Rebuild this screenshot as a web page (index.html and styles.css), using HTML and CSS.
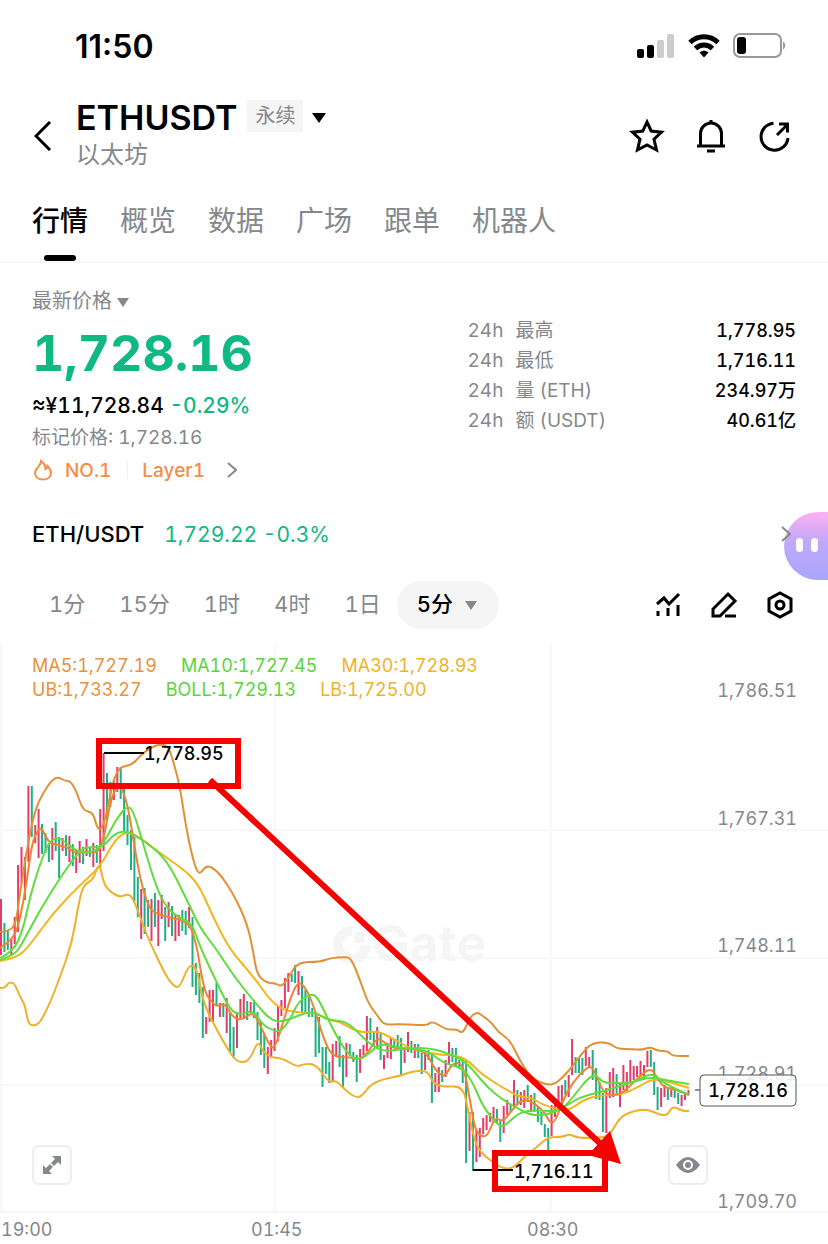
FILE: index.html
```
<!DOCTYPE html>
<html lang="zh-CN">
<head>
    <meta charset="UTF-8">
    <title>ETHUSDT 永续</title>
    <meta name="viewport" content="width=device-width, initial-scale=1">
    <link rel="stylesheet" href="styles.css">
</head>
<body>

<div class="statusbar">
    <span class="clock">11:50</span>
    <div class="status-icons">
        <svg width="38" height="24" viewBox="0 0 38 24">
            <rect x="0" y="15" width="7" height="9" rx="2"/>
            <rect x="10" y="11" width="7" height="13" rx="2"/>
            <rect x="20" y="6" width="7" height="18" rx="2" fill="#ccc"/>
            <rect x="30" y="0" width="7" height="24" rx="2" fill="#ccc"/>
        </svg>
        <svg width="32" height="24" viewBox="0 0 32 24" fill="none" stroke="#000" stroke-width="5">
            <path d="M2 8.500C10 .8 22 .8 30 8.500"/>
            <path d="M7.500 14.500C12.500 9.800 19.500 9.800 24.500 14.500"/>
            <path d="M11.500 18.500C14 16.300 18 16.300 20.500 18.500L16 23.500Z" fill="#000" stroke="none"/>
        </svg>
        <svg width="54" height="26" viewBox="0 0 54 26">
            <rect x="1" y="1" width="47" height="23" rx="6" fill="none" stroke="#999" stroke-width="2"/>
            <rect x="4" y="4" width="9" height="17" rx="3"/>
            <path d="M50 8.500C53 10 53 15 50 16.500Z" fill="#999"/>
        </svg>
    </div>
</div>

<header class="topbar">
    <button class="icon-btn back" aria-label="返回">
        <svg width="18" height="30" viewBox="0 0 18 30"><path d="M16 1L2 15L16 29"/></svg>
    </button>
    <div class="pair">
        <div class="pair-row">
            <h1>ETHUSDT</h1>
            <span class="tag">永续</span>
            <svg class="caret" width="14" height="10" viewBox="0 0 14 10"><path d="M0 0H14L7 10Z"/></svg>
        </div>
        <div class="pair-sub">以太坊</div>
    </div>
    <div class="top-actions">
        <button class="icon-btn" aria-label="收藏">
            <svg width="36" height="36" viewBox="0 0 36 36"><path d="M18 4L22.200 13L32.500 14.200L25 21.200L27.500 32L18 27L8.500 32L11 21.200L3.500 14.200L13.800 13Z"/></svg>
        </button>
        <button class="icon-btn" aria-label="提醒">
            <svg width="36" height="36" viewBox="0 0 36 36"><path d="M18 2V5M4 28H32M7.500 28V15.500A10.500 10.500 0 0 1 28.500 15.500V28M14 33H22"/></svg>
        </button>
        <button class="icon-btn" aria-label="分享">
            <svg width="36" height="36" viewBox="0 0 36 36"><path d="M16.500 5.200A13.500 13.500 0 1 0 31 20M20 17L30 7M22 6H30.500V14.500"/></svg>
        </button>
    </div>
</header>

<nav class="tabs">
    <a href="#" class="active">行情</a>
    <a href="#">概览</a>
    <a href="#">数据</a>
    <a href="#">广场</a>
    <a href="#">跟单</a>
    <a href="#">机器人</a>
</nav>

<section class="summary">
    <div class="quote">
        <div class="quote-label">最新价格
            <svg width="12" height="9" viewBox="0 0 12 9"><path d="M0 0H12L6 9Z" fill="#84888c"/></svg>
        </div>
        <div class="price">1,728.16</div>
        <div class="fiat">≈¥11,728.84 <span class="up">-0.29%</span></div>
        <div class="mark">标记价格: 1,728.16</div>
        <div class="badges">
            <svg width="22" height="22" viewBox="0 0 22 22"><path d="M9 2C12 4 13.500 7 13.500 10C15 9.500 15.500 8 15.500 7C18 9.500 19 11.500 19 14C19 18 15.500 20.500 11 20.500C6.500 20.500 3 18 3 14C3 11 5 9.500 6.500 7.500C8 5.500 9 4 9 2Z" fill="none" stroke="#f78c45" stroke-width="2"/></svg>
            <span>NO.1</span>
            <i class="divider"></i>
            <span>Layer1</span>
            <svg class="chev" width="10" height="16" viewBox="0 0 10 16"><path d="M1 1L9 8L1 15"/></svg>
        </div>
    </div>
    <table class="stats">
        <tr><th><b>24h</b>最高</th><td>1,778.95</td></tr>
        <tr><th><b>24h</b>最低</th><td>1,716.11</td></tr>
        <tr><th><b>24h</b>量 (ETH)</th><td>234.97万</td></tr>
        <tr><th><b>24h</b>额 (USDT)</th><td>40.61亿</td></tr>
    </table>
</section>

<div class="spot">
    <span class="spot-name">ETH/USDT</span>
    <span class="spot-price up">1,729.22 -0.3%</span>
    <button class="helper" aria-label="助手"><i></i><i></i></button>
    <svg class="chev" width="10" height="16" viewBox="0 0 10 16"><path d="M1 1L9 8L1 15"/></svg>
</div>

<div class="intervals">
    <button>1分</button>
    <button>15分</button>
    <button>1时</button>
    <button>4时</button>
    <button>1日</button>
    <button class="current">5分 <svg width="12" height="9" viewBox="0 0 12 9"><path d="M0 0H12L6 9Z" fill="#84888c"/></svg></button>
    <div class="chart-tools">
        <button class="icon-btn" aria-label="指标">
            <svg width="28" height="28" viewBox="0 0 28 28"><path d="M3 13L10 7L15 13L25 3M4 20V25M14 17V25M24 14V25"/></svg>
        </button>
        <button class="icon-btn" aria-label="画线">
            <svg width="28" height="28" viewBox="0 0 28 28"><path d="M3 25V18L18 3L25 10L10 25ZM15 25H26"/></svg>
        </button>
        <button class="icon-btn" aria-label="设置">
            <svg width="28" height="28" viewBox="0 0 28 28"><path d="M14 2L25 8V20L14 26L3 20V8Z"/><circle cx="14" cy="14" r="4"/></svg>
        </button>
    </div>
</div>

<main class="chart">
    <div class="legend">
        <div class="legend-row"><span class="c1">MA5:1,727.19</span><span class="c2">MA10:1,727.45</span><span class="c3">MA30:1,728.93</span></div>
        <div class="legend-row"><span class="c1">UB:1,733.27</span><span class="c2">BOLL:1,729.13</span><span class="c3">LB:1,725.00</span></div>
    </div>

    <svg class="plot" viewBox="0 644 828 600">
        <g class="grid">
            <path d="M0 830H828M0 958H828M0 1085H828M0 1212H828M1 644V1212M275 644V1212M551 644V1212"/>
        </g>
        <g class="watermark">
            <path d="M352 931A14 14 0 1 0 366 945"/>
            <rect x="354" y="932" width="11" height="11"/>
            <text x="372" y="961">Gate</text>
        </g>
        <g class="axis">
            <text x="797" y="697">1,786.51</text>
            <text x="797" y="825">1,767.31</text>
            <text x="797" y="952">1,748.11</text>
            <text x="797" y="1080">1,728.91</text>
            <text x="797" y="1208">1,709.70</text>
        </g>
        <g class="time">
            <text x="1" y="1236">19:00</text>
            <text x="251" y="1236">01:45</text>
            <text x="527" y="1236">08:30</text>
        </g>

        <g id="candles"></g>
        <g id="lines"></g>

        <!-- high / low markers -->
        <path class="marker" d="M104 753H144M473 1170H513"/>
        <text class="marker-text" x="144" y="760">1,778.95</text>
        <text class="marker-text" x="514" y="1178">1,716.11</text>

        <!-- last price -->
        <path d="M695 1090H700" stroke="#222"/>
        <rect x="700" y="1075" width="96" height="31" rx="4" fill="#fff" fill-opacity=".85" stroke="#555"/>
        <text class="last" x="748" y="1097">1,728.16</text>

        <g class="note">
            <rect x="99" y="741" width="139" height="45"/>
            <rect x="495" y="1153" width="110" height="36"/>
            <path d="M210 780L604 1147"/>
            <path class="head" d="M621 1164L610 1131L588 1155Z"/>
        </g>
    </svg>

    <button class="float-btn expand" aria-label="全屏">
        <svg width="20" height="20" viewBox="0 0 20 20"><path d="M10 1H19V10L16 7L12 11L9 8L13 4ZM1 10L4 13L8 9L11 12L7 16L10 19H1Z" fill="#84888c"/></svg>
    </button>
    <button class="float-btn eye" aria-label="显示">
        <svg width="24" height="18" viewBox="0 0 24 18"><path d="M0 9Q12 -7 24 9Q12 25 0 9Z" fill="#84888c"/><circle cx="12" cy="9" r="4" fill="#84888c" stroke="#fff" stroke-width="2"/></svg>
    </button>
</main>

<script src="chart.js"></script>
</body>
</html>
```
FILE: styles.css
```
* {
    box-sizing: border-box;
}

body {
    margin: 0;
    background: #fff;
    color: #000;
    font-family: Inter, "Noto Sans CJK SC", sans-serif;
    font-size: 20px;
    font-variant-numeric: tabular-nums;
}

button {
    font: inherit;
    color: inherit;
    background: none;
    border: 0;
    padding: 0;
    cursor: pointer;
}

a {
    color: inherit;
    text-decoration: none;
}

svg {
    flex: none;
}

.up {
    color: #10b882;
}

/* status bar */
.statusbar {
    display: flex;
    justify-content: space-between;
    align-items: center;
    height: 90px;
    padding: 2px 41px 0 75px;
}

.clock {
    font-size: 32px;
    font-weight: 600;
    font-variant-numeric: normal;
}

.status-icons {
    display: flex;
    align-items: center;
    gap: 13px;
}

/* header */
.topbar {
    display: flex;
    align-items: center;
    height: 92px;
    padding: 0 35px 0 34px;
}

.icon-btn {
    display: flex;
}

.icon-btn svg {
    fill: none;
    stroke: #000;
    stroke-width: 3;
}

.back {
    width: 42px;
}

.pair {
    flex: 1;
    padding-bottom: 2px;
}

.pair-row {
    display: flex;
    align-items: center;
    height: 40px;
}

h1 {
    margin: 0;
    font-size: 34px;
    font-weight: 600;
    line-height: 40px;
}

.tag {
    margin: 0 9px 4px 10px;
    padding: 0 8px;
    background: #f5f5f5;
    color: #84888c;
    line-height: 32px;
}

.pair-sub {
    color: #84888c;
    font-size: 24px;
    line-height: 34px;
}

.top-actions {
    display: flex;
    gap: 28px;
}

/* tabs */
.tabs {
    display: flex;
    gap: 32px;
    height: 81px;
    padding: 0 32px;
    border-bottom: 2px solid #f8f8f8;
    color: #84888c;
    font-size: 28px;
    line-height: 78px;
}

.tabs .active {
    position: relative;
    color: #000;
    font-weight: 500;
}

.tabs .active::after {
    content: "";
    position: absolute;
    left: 12px;
    right: 12px;
    bottom: 0;
    height: 6px;
    border-radius: 3px;
    background: #000;
}

/* price block */
.summary {
    display: flex;
    justify-content: space-between;
    padding: 22px 32px 0;
}

.quote-label {
    color: #84888c;
    line-height: 32px;
}

.quote-label svg {
    margin-bottom: 1px;
}

.price {
    color: #10b882;
    font-size: 50px;
    font-weight: 700;
    line-height: 72px;
}

.fiat {
    font-size: 21px;
    font-weight: 500;
    line-height: 34px;
}

.mark {
    color: #84888c;
    font-size: 19px;
    line-height: 30px;
}

.badges {
    display: flex;
    align-items: center;
    height: 34px;
    color: #f78c45;
    font-size: 19px;
    font-weight: 500;
}

.badges span {
    margin-left: 11px;
}

.divider {
    width: 1px;
    height: 18px;
    margin-left: 16px;
    background: #eee;
}

.badges .divider + span {
    margin: 0 22px 0 14px;
}

.chev {
    fill: none;
    stroke: #84888c;
    stroke-width: 2;
}

.stats {
    width: 43%;
    align-self: flex-start;
    margin-top: 31px;
    border-collapse: collapse;
    font-size: 19px;
    line-height: 30px;
}

.stats th {
    padding: 0;
    color: #84888c;
    font-weight: 400;
    text-align: left;
}

.stats b {
    margin-right: 12px;
    font-weight: 400;
}

.stats td {
    padding: 0;
    font-size: 18px;
    font-weight: 500;
    text-align: right;
}

.spot {
    position: relative;
    display: flex;
    align-items: center;
    gap: 20px;
    height: 44px;
    margin-top: 25px;
    padding: 0 37px 0 32px;
    font-size: 22px;
}

.spot-name {
    font-weight: 500;
}

.spot-price {
    font-size: 21px;
}

.spot .chev {
    position: relative;
    margin-left: auto;
}

.helper {
    position: absolute;
    top: 0;
    right: 0;
    display: flex;
    gap: 8px;
    width: 44px;
    height: 68px;
    padding: 26px 0 0 12px;
    border-radius: 34px 0 0 34px;
    background: linear-gradient(#ffaff5, #c0a8f8 45%, #a8a6ff);
}

.helper i {
    width: 7px;
    height: 14px;
    border-radius: 4px;
    background: #fff;
}

/* interval picker */
.intervals {
    display: flex;
    align-items: center;
    height: 88px;
    padding: 10px 34px 0 49px;
    color: #84888c;
    font-size: 22px;
}

.intervals > button {
    margin-right: 34px;
    line-height: 30px;
    padding-bottom: 2px;
}

.intervals > .current {
    height: 48px;
    margin: 0 0 0 -18px;
    padding: 0 22px 2px 20px;
    border-radius: 24px;
    background: #f5f5f5;
    color: #000;
    font-weight: 500;
}

.current svg {
    margin: 0 0 2px 6px;
}

.chart-tools {
    display: flex;
    gap: 28px;
    margin-left: auto;
}

/* chart */
.chart {
    position: relative;
}

.plot {
    display: block;
    width: 100%;
}

.legend {
    position: absolute;
    top: 10px;
    left: 32px;
    font-size: 18px;
    line-height: 24px;
}

.legend-row {
    display: flex;
    gap: 24px;
}

.c1 { color: #e8923a; }
.c2 { color: #5bd43c; }
.c3 { color: #efb329; }

.grid path {
    stroke: #f8f8f8;
    stroke-width: 2;
}

.watermark {
    fill: #f5f5f5;
    font-size: 50px;
    font-weight: 700;
}

.watermark path {
    fill: none;
    stroke: #f5f5f5;
    stroke-width: 10;
}

.axis, .time {
    fill: #84888c;
    font-size: 18px;
}

.axis {
    text-anchor: end;
}

#candles path {
    fill: none;
    stroke-width: 2;
}

#lines path {
    fill: none;
    stroke-width: 2;
    stroke-linejoin: round;
}

.marker {
    stroke: #000;
    stroke-width: 2;
}

.marker-text, .last {
    font-size: 18px;
    font-weight: 500;
}

.last {
    text-anchor: middle;
}

.note {
    fill: none;
    stroke: #f60000;
    stroke-width: 6;
}

.note .head {
    fill: #f60000;
    stroke: none;
}

.float-btn {
    position: absolute;
    bottom: 59px;
    display: flex;
    align-items: center;
    justify-content: center;
    width: 40px;
    height: 40px;
    border: 2px solid #eee;
    border-radius: 7px;
    background: #fff;
}

.expand {
    left: 32px;
}

.eye {
    right: 120px;
}
```
FILE: chart.js
```
// one entry per 5 min candle: colour, top, bottom
const candles = `r899-955 g923-952 g930-950 r938-955 r917-944 r865-932 r847-883 r857-900 r786-862 g786-837
r825-843 r809-858 g824-854 g833-853 g843-862 r828-860 g822-851 g837-878 r838-851 g835-856
r836-862 g844-866 r850-873 r841-863 g847-864 r839-856 g848-857 r843-867 g845-863 r809-867
r753-851 g773-820 g782-807 r779-800 r767-792 g767-799 g788-832 g815-845 g830-870 g837-901
g877-917 r889-939 g888-934 g900-927 r899-941 g893-927 r900-946 r895-919 g907-941 r902-927
g906-936 r915-941 r915-936 g910-931 g911-935 r907-928 g917-987 g963-995 g973-1003 g987-1038
r1017-1034 r990-1022 r990-1022 g983-1006 r1003-1017 g1003-1017 r998-1033 g1013-1052 g1027-1058 r1012-1048
r999-1018 r994-1018 g1001-1020 r1002-1012 g1000-1018 g1012-1040 g1022-1055 g1033-1068 r1047-1074 r1040-1058
r1028-1051 r1006-1041 r1000-1016 r978-1008 r973-992 g974-982 g965-983 r971-995 g976-1013 g990-1013
g997-1017 g1008-1017 g1013-1057 g1017-1053 g1047-1087 g1047-1074 g1062-1083 r1044-1082 r1041-1057 g1036-1067
g1055-1087 r1043-1077 g1044-1056 g1052-1062 g1055-1082 r1049-1073 r1045-1055 r1016-1051 g1018-1040 g1032-1047
r1027-1048 g1032-1060 r1055-1069 r1043-1058 r1037-1059 g1040-1048 g1035-1047 g1038-1075 r1047-1063 r1032-1052
g1041-1053 r1044-1058 g1044-1058 g1053-1074 r1052-1070 g1050-1060 g1053-1103 r1073-1092 r1067-1092 g1070-1082
r1060-1077 r1042-1065 g1048-1062 g1048-1066 g1060-1067 g1059-1083 g1060-1163 r1112-1151 g1112-1171 r1130-1162
r1128-1157 r1118-1134 r1115-1130 r1113-1122 r1107-1122 g1109-1123 g1120-1142 r1106-1133 r1100-1115 g1104-1112
r1080-1108 g1090-1105 r1092-1105 r1090-1108 g1085-1102 r1095-1112 g1093-1112 g1107-1122 g1112-1125 g1124-1137
g1128-1152 r1105-1136 r1100-1117 r1086-1108 r1085-1103 g1080-1095 r1075-1097 r1039-1075 g1057-1073 g1058-1073
g1058-1075 r1047-1066 r1057-1068 g1050-1080 g1068-1099 g1082-1100 g1093-1132 r1088-1133 r1072-1098 r1068-1097
g1074-1095 r1082-1107 r1065-1090 r1072-1092 r1060-1082 r1066-1080 r1066-1077 r1061-1077 r1065-1080 r1051-1067
g1050-1067 g1062-1095 g1087-1110 r1088-1107 r1085-1097 g1088-1100 r1086-1097 g1088-1098 g1093-1104 r1095-1106
r1092-1100 r1090-1095`.split(/\s+/);

const lines = [
    // UB
    ['#e39034', '0,932 10,931 16,923 20,893 28,843 35,810 43,793 52,780 58,777 65,781 70,781 76,790 83,811 93,812 97,828 101,830 106,817 112,785 119,767 132,765 140,756 150,748 160,744 168,746 173,760 180,787 186,827 193,860 199,876 206,865 217,870 233,893 247,923 253,950 257,975 267,983 275,983 282,987 290,975 298,962 320,962 330,958 345,957 351,958 360,980 368,1003 377,1015 384,1025 397,1024 420,1025 428,1025 432,1021 447,1030 457,1029 463,1034 470,1017 477,1012 483,1016 492,1023 498,1032 510,1040 518,1057 527,1072 535,1080 547,1085 555,1084 563,1077 572,1067 583,1052 592,1043 608,1042 617,1049 633,1049 642,1050 650,1047 658,1051 668,1051 672,1056 689,1056'],
    // LB
    ['#efb02a', '0,988 5,988 8,983 14,982 20,997 25,1005 28,1023 33,1026 40,1023 50,1003 60,977 72,943 78,907 83,885 93,880 97,868 100,865 104,885 112,893 120,897 128,894 133,898 140,917 150,943 167,978 175,987 180,987 189,964 197,968 203,1003 219,1034 233,1058 241,1063 250,1060 258,1040 263,1052 272,1058 282,1058 297,1067 303,1064 316,1064 329,1083 336,1080 347,1092 357,1098 363,1095 370,1085 383,1079 400,1076 410,1072 427,1070 433,1083 443,1087 463,1086 468,1110 475,1143 483,1155 500,1167 507,1169 515,1167 523,1158 537,1147 548,1137 563,1137 569,1134 578,1138 600,1138 610,1135 620,1117 633,1111 647,1109 660,1115 668,1115 672,1106 683,1111 689,1111'],
    // MA30
    ['#f3b71c', '0,961 17,958 30,945 53,913 80,885 100,867 113,843 123,833 133,833 147,843 167,858 187,872 200,887 213,917 230,950 253,976 270,1000 283,1010 303,1013 313,1012 330,1020 340,1022 360,1033 377,1031 390,1037 413,1050 427,1052 440,1055 457,1055 470,1062 480,1073 503,1088 520,1097 530,1097 543,1105 567,1112 583,1100 600,1095 620,1095 637,1088 653,1078 673,1083 689,1088'],
    // MA5
    ['#ee8433', '0,948 13,940 20,920 27,880 32,843 38,830 42,828 48,842 57,845 67,847 75,853 87,852 99,853 105,833 110,803 117,785 122,788 128,807 133,837 138,867 143,890 150,910 160,915 173,918 190,923 197,947 200,967 205,992 210,1000 217,1007 225,1003 233,1018 243,1020 252,1012 258,1020 270,1047 275,1048 283,1023 292,993 299,981 307,990 315,1010 323,1037 332,1057 350,1057 358,1060 368,1053 377,1037 385,1043 397,1050 413,1048 427,1053 435,1070 445,1078 452,1063 463,1063 470,1100 475,1130 482,1137 488,1135 495,1117 503,1122 512,1110 523,1098 537,1105 545,1113 550,1123 555,1122 562,1103 572,1083 587,1067 593,1067 602,1090 608,1095 620,1095 633,1083 650,1067 657,1077 663,1087 677,1090 689,1095'],
    // MA10
    ['#62dc3c', '0,958 13,952 23,930 30,897 38,870 48,843 57,837 67,843 77,852 97,852 107,837 117,818 127,806 133,810 143,843 153,877 163,903 177,917 192,923 200,947 217,983 230,1010 240,1015 253,1010 263,1025 272,1030 280,1032 290,1020 298,1002 310,994 317,996 327,1017 337,1037 347,1053 358,1061 370,1053 380,1043 400,1048 427,1050 443,1063 463,1068 473,1083 483,1107 500,1128 508,1123 520,1112 537,1110 560,1112 573,1097 593,1072 603,1083 617,1083 633,1083 652,1072 663,1083 689,1095'],
    // BOLL
    ['#62dc3c', '0,960 15,955 23,942 40,910 60,878 75,857 83,848 93,847 103,847 115,833 127,831 137,837 147,843 167,860 187,900 200,928 217,950 233,975 253,1000 270,1020 283,1022 307,1012 317,1013 327,1020 343,1021 353,1027 367,1042 383,1052 407,1048 430,1048 447,1053 463,1060 473,1070 487,1087 503,1100 517,1108 530,1115 547,1115 563,1108 580,1097 597,1093 617,1087 633,1082 650,1077 670,1081 689,1084']
];

function addPath(parent, color, d) {
    const path = document.createElementNS('http://www.w3.org/2000/svg', 'path');
    path.setAttribute('stroke', color);
    path.setAttribute('d', d);
    document.getElementById(parent).appendChild(path);
}

let red = '';
let green = '';
candles.forEach((c, i) => {
    const x = (1 + i * 3.42).toFixed(1);
    const [top, bottom] = c.slice(1).split('-');
    const bar = `M${x} ${top}V${bottom}`;
    if (c[0] === 'r') red += bar;
    else green += bar;
});
addPath('candles', '#e23d68', red);
addPath('candles', '#1eb083', green);

// round the corners by running curves through the midpoints
lines.forEach(([color, str]) => {
    const pts = str.split(' ').map(p => p.split(',').map(Number));
    let d = `M${pts[0]}`;
    for (let i = 1; i < pts.length - 1; i++) {
        const mx = (pts[i][0] + pts[i + 1][0]) / 2;
        const my = (pts[i][1] + pts[i + 1][1]) / 2;
        d += `Q${pts[i]} ${mx},${my}`;
    }
    d += `L${pts[pts.length - 1]}`;
    addPath('lines', color, d);
});
```
